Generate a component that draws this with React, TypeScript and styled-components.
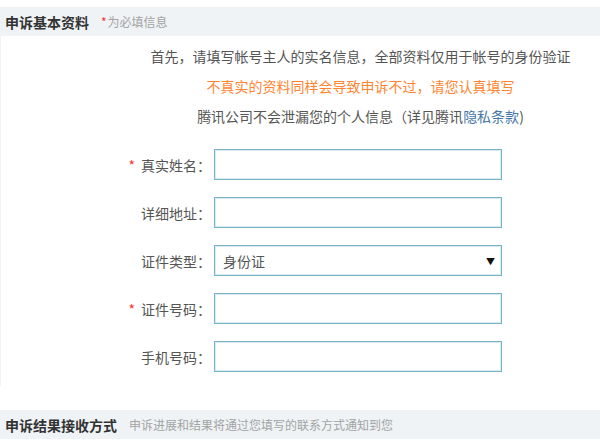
import React from 'react'
import styled, { createGlobalStyle } from 'styled-components'

const GlobalStyle = createGlobalStyle`
  body {
    margin: 0;
    background: #fff;
    font-family: "Noto Sans CJK SC", "Liberation Sans", sans-serif;
    color: #555;
  }
`

const FIELDS = [
  { label: '真实姓名：', required: true, type: 'input' },
  { label: '详细地址：', required: false, type: 'input' },
  { label: '证件类型：', required: false, type: 'select' },
  { label: '证件号码：', required: true, type: 'input' },
  { label: '手机号码：', required: false, type: 'input' },
]

const App = () => {
  return (
    <Page>
      <GlobalStyle />
      <SectionHeader>
        <HeaderTitle>申诉基本资料</HeaderTitle>
        <HeaderNote>
          <Star>*</Star>为必填信息
        </HeaderNote>
      </SectionHeader>
      <Content>
        <Intro>
          <IntroLine>首先，请填写帐号主人的实名信息，全部资料仅用于帐号的身份验证</IntroLine>
          <IntroLine $warn>不真实的资料同样会导致申诉不过，请您认真填写</IntroLine>
          <IntroLine>
            腾讯公司不会泄漏您的个人信息（详见腾讯<PolicyLink href="#">隐私条款</PolicyLink>)
          </IntroLine>
        </Intro>
        <Form>
          {FIELDS.map((f) => (
            <Row key={f.label}>
              <Label>
                {f.required && <Required>*</Required>}
                {f.label}
              </Label>
              {f.type === 'select' ? (
                <SelectWrap>
                  <Select defaultValue="id">
                    <option value="id">身份证</option>
                  </Select>
                  <Arrow>▼</Arrow>
                </SelectWrap>
              ) : (
                <Input type="text" />
              )}
            </Row>
          ))}
        </Form>
      </Content>
      <SectionHeader>
        <HeaderTitle>申诉结果接收方式</HeaderTitle>
        <HeaderNote>申诉进展和结果将通过您填写的联系方式通知到您</HeaderNote>
      </SectionHeader>
    </Page>
  )
}

const Page = styled.div`
  width: 600px;
  padding-top: 7px;
`

const SectionHeader = styled.div`
  display: flex;
  align-items: center;
  height: 29px;
  padding-left: 5px;
  background: #eff3f6;
`

const HeaderTitle = styled.h2`
  margin: 0;
  font-size: 14px;
  font-weight: bold;
  color: #333;
`

const HeaderNote = styled.span`
  margin-left: 12px;
  font-size: 12px;
  color: #a3a3a3;
`

const Star = styled.span`
  color: #e33;
  margin-right: 1px;
`

const Content = styled.div`
  border-left: 1px solid #f3f3f3;
  padding: 5px 0 14px;
  margin-bottom: 24px;
`

const Intro = styled.div`
  padding-left: 120px;
  text-align: center;
  font-size: 14px;
`

const IntroLine = styled.p<{ $warn?: boolean }>`
  margin: 0;
  line-height: 30px;
  color: ${({ $warn }) => ($warn ? '#ff8533' : '#555')};
`

const PolicyLink = styled.a`
  color: #4677a8;
  text-decoration: none;
`

const Form = styled.div`
  display: flex;
  flex-direction: column;
  gap: 17px;
  margin-top: 18px;
`

const Row = styled.div`
  display: grid;
  grid-template-columns: 210px 288px;
  column-gap: 3px;
  align-items: center;
`

const Label = styled.label`
  text-align: right;
  font-size: 14px;
  color: #555;
`

const Required = styled.span`
  color: #f33;
  margin-right: 6px;
`

const Input = styled.input`
  box-sizing: border-box;
  width: 288px;
  height: 31px;
  margin: 0;
  border: 1px solid #76b3c6;
  box-shadow: inset 0 0 0 1px #d9ecf2;
  outline: none;
  padding: 0 8px;
  font-family: inherit;
  font-size: 14px;
`

const SelectWrap = styled.div`
  position: relative;
  width: 288px;
  height: 31px;
`

const Select = styled.select`
  box-sizing: border-box;
  width: 100%;
  height: 100%;
  margin: 0;
  appearance: none;
  border: 1px solid #76b3c6;
  box-shadow: inset 0 0 0 1px #d9ecf2;
  border-radius: 0;
  background: #fff;
  outline: none;
  padding: 0 8px;
  font-family: inherit;
  font-size: 14px;
  color: #555;
`

const Arrow = styled.span`
  position: absolute;
  right: 7px;
  top: 50%;
  transform: translateY(-50%);
  font-size: 9px;
  color: #111;
  pointer-events: none;
`

export default App
